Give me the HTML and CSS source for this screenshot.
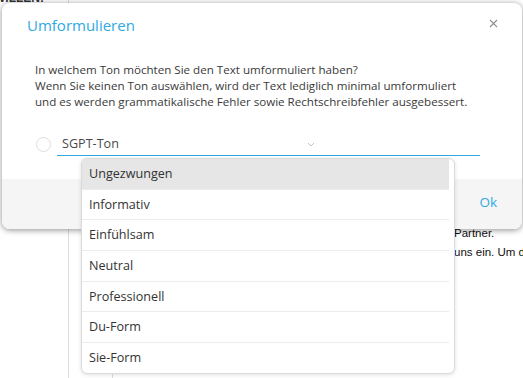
FILE: index.html
```html
<!DOCTYPE html>
<html lang="de">
<head>
<meta charset="utf-8">
<link rel="stylesheet" href="styles.css">
</head>
<body>
<div class="page">
  <div class="sidebar">
    <div class="side-head">WILLEN:</div>
  </div>
  <div class="main">
    <div class="main-text">
      <p>Partner.</p>
      <p>uns ein. Um den</p>
    </div>
    <div class="subpanel"></div>
  </div>
</div>

<div class="modal">
  <div class="modal-header">
    <span class="modal-title">Umformulieren</span>
    <svg class="close" width="9" height="9" viewBox="0 0 9 9"><path d="M1 1L8 8M8 1L1 8" stroke="#8f8f8f" stroke-width="1.1" fill="none"/></svg>
  </div>
  <div class="modal-body">
    <p class="intro">In welchem Ton möchten Sie den Text umformuliert haben?<br>Wenn Sie keinen Ton auswählen, wird der Text lediglich minimal umformuliert<br>und es werden grammatikalische Fehler sowie Rechtschreibfehler ausgebessert.</p>
    <div class="select-row">
      <span class="radio"></span>
      <div class="select">
        <div class="select-inner">
          <span>SGPT-Ton</span>
          <svg class="chev" width="8" height="5" viewBox="0 0 8 5"><path d="M1 1L4 4L7 1" stroke="#c4c4c4" stroke-width="1" fill="none"/></svg>
        </div>
      </div>
    </div>
  </div>
  <div class="modal-footer">
    <span class="ok">Ok</span>
  </div>
</div>

<div class="dropdown">
  <ul class="options">
    <li class="active">Ungezwungen</li>
    <li>Informativ</li>
    <li>Einfühlsam</li>
    <li>Neutral</li>
    <li>Professionell</li>
    <li>Du-Form</li>
    <li>Sie-Form</li>
  </ul>
</div>
</body>
</html>
```
FILE: styles.css
```css
html, body {
  margin: 0;
  padding: 0;
  background: #fff;
  width: 523px;
  height: 378px;
  overflow: hidden;
  font-family: "Open Sans", "DejaVu Sans", sans-serif;
}

.page {
  display: flex;
  height: 378px;
}

.sidebar {
  width: 68px;
  border-right: 1px solid #dcdcdc;
  flex: none;
  overflow: hidden;
}

.side-head {
  margin-top: -8px;
  margin-left: -6px;
  font-family: "Liberation Sans", Arial, sans-serif;
  font-size: 12px;
  font-weight: bold;
  color: #333;
  height: 12px;
  line-height: 12px;
  white-space: nowrap;
}

.main {
  flex: 1;
  display: flex;
  flex-direction: column;
  font-family: "Liberation Sans", Arial, sans-serif;
  overflow: hidden;
}

.main-text {
  margin-top: 224px;
  padding-left: 385px;
  white-space: nowrap;
  font-size: 11.5px;
  color: #111;
}

.main-text p {
  margin: 0;
  line-height: 19px;
}

.subpanel {
  margin-top: auto;
  margin-left: 43px;
  height: 5px;
  border-left: 1px solid #dcdcdc;
}

.modal {
  position: absolute;
  left: 2px;
  top: 3px;
  width: 520px;
  height: 226px;
  background: #fff;
  border-radius: 8px;
  box-shadow: 0 1px 6px rgba(0, 0, 0, 0.45);
  display: flex;
  flex-direction: column;
  overflow: hidden;
}

.modal-header {
  display: flex;
  justify-content: space-between;
  align-items: center;
  padding: 11px 24px 0 25px;
  height: 22px;
}

.modal-title {
  font-size: 15px;
  color: #2fa9df;
  line-height: 22px;
}

.close {
  margin-top: -4px;
}

.modal-body {
  padding: 26px 25px 0 33px;
  flex: 1;
}

.intro {
  margin: 0;
  font-size: 11.6px;
  line-height: 16px;
  color: #3a3a3a;
}

.select-row {
  display: flex;
  align-items: center;
  margin-top: 22px;
  height: 24px;
}

.radio {
  width: 13px;
  height: 13px;
  border: 1px solid #dedede;
  border-radius: 50%;
  margin-left: 1px;
  flex: none;
}

.select {
  margin-left: 6px;
  width: 423px;
  height: 23px;
  border-bottom: 1px solid #2fa9df;
}

.select-inner {
  display: flex;
  align-items: center;
  justify-content: space-between;
  width: 253px;
  padding-left: 5px;
  height: 23px;
  font-size: 12.6px;
  color: #4a4a4a;
}

.chev {
  margin-top: 2px;
}

.modal-footer {
  height: 50px;
  background: #f5f5f5;
  display: flex;
  justify-content: flex-end;
  align-items: center;
  padding-right: 25px;
  flex: none;
}

.ok {
  font-size: 13.5px;
  color: #2fa9df;
  margin-top: -4px;
}

.dropdown {
  position: absolute;
  left: 81px;
  top: 158px;
  width: 367px;
  background: #fff;
  border: 1px solid #dadada;
  border-radius: 6px;
  box-shadow: 0 1px 4px rgba(0, 0, 0, 0.12);
  padding-right: 5px;
}

.options {
  list-style: none;
  margin: 0;
  padding: 0;
}

.options li {
  height: 29.7px;
  line-height: 29.7px;
  padding-left: 7px;
  font-size: 12.6px;
  color: #333;
  border-bottom: 1px solid #ececec;
}

.options li:last-child {
  border-bottom: none;
}

.options li.active {
  background: #e6e6e6;
}
```
